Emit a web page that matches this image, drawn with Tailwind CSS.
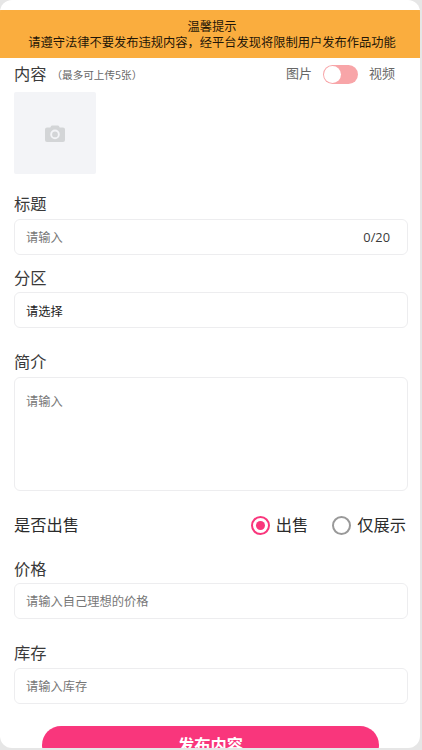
<!DOCTYPE html>
<html lang="zh-CN">
<head>
<meta charset="utf-8">
<meta name="viewport" content="width=device-width, initial-scale=1">
<title>发布内容</title>
<script src="https://cdn.jsdelivr.net/npm/@tailwindcss/browser@4"></script>
</head>
<body class="h-[750px] overflow-hidden bg-[#e6e6e6] font-['Open_Sans','Noto_Sans_CJK_SC',sans-serif] text-[#3a3a3a]">
<main class="flex h-[748px] w-[420px] flex-col overflow-hidden rounded-[12px] bg-white pt-[10px]">
  <div class="flex h-[48px] shrink-0 flex-col items-center justify-center bg-[#faad3e] pt-[2px] pl-[4px] text-[12.25px] leading-[16px] text-[#1f1608]">
    <p>温馨提示</p>
    <p class="whitespace-nowrap">请遵守法律不要发布违规内容，经平台发现将限制用户发布作品功能</p>
  </div>
  <form class="flex w-full shrink-0 flex-col pr-[12px] pl-[14px]">
    <div class="flex h-[34px] items-center pr-[13px] pb-[2px]">
      <span class="text-[16.25px]">内容</span>
      <span class="ml-[5px] pt-[3px] text-[10.6px] text-[#666]">（最多可上传5张）</span>
      <span class="ml-auto text-[13px] text-[#666]">图片</span>
      <span class="mr-[11px] ml-[11px] flex h-[19px] w-[35px] rounded-full bg-[#f8a5a8] p-px"><span class="size-[17px] rounded-full bg-white"></span></span>
      <span class="text-[13px] text-[#666]">视频</span>
    </div>
    <div class="flex size-[82px] items-center justify-center rounded-[2px] bg-[#f3f4f7]">
      <svg class="h-[17px] w-[20px]" viewBox="0 0 20 17"><path fill="#d3d5d7" fill-rule="evenodd" d="M7 .5h6q.6 0 .9.6L14.700 2.500H18a2 2 0 0 1 2 2V15a2 2 0 0 1-2 2H2a2 2 0 0 1-2-2V4.500a2 2 0 0 1 2-2h3.300L6.100 1.100Q6.400.5 7 .5zM10 4.600a4.800 4.800 0 1 0 0 9.600a4.800 4.800 0 0 0 0-9.600zM10 6.500a2.900 2.900 0 1 1 0 5.800a2.900 2.900 0 0 1 0-5.800z"/></svg>
    </div>
    <label class="mt-[15px] flex h-[30px] items-center pt-px text-[16.25px]">标题</label>
    <div class="flex h-[36px] items-center justify-between rounded-[6px] border border-[#ededef] pt-[2px] pr-[17px] pl-[11px] text-[12.25px]">
      <span class="text-[#777]">请输入</span><span class="text-[12.8px]">0/20</span>
    </div>
    <label class="mt-[8px] flex h-[29px] items-center pt-[2px] text-[16.25px]">分区</label>
    <div class="flex h-[36px] items-center rounded-[6px] border border-[#ededef] pt-[4px] pl-[11px] text-[12.25px] text-[#222]">请选择</div>
    <label class="mt-[19px] flex h-[30px] items-center text-[16.25px]">简介</label>
    <div class="h-[114px] rounded-[6px] border border-[#ededef] pt-[15px] pl-[11px] text-[12.25px] leading-[18px] text-[#777]">请输入</div>
    <div class="mt-[19px] flex h-[30px] items-center pr-[2px] text-[16.25px] text-[#2b2b2b]">
      <span>是否出售</span>
      <span class="ml-auto flex size-[19px] items-center justify-center rounded-full border-2 border-[#f9367c]"><span class="size-[9px] rounded-full bg-[#f9367c]"></span></span>
      <span class="ml-[6px]">出售</span>
      <span class="ml-[24px] size-[19px] rounded-full border-2 border-[#999]"></span>
      <span class="ml-[6px]">仅展示</span>
    </div>
    <label class="mt-[13px] flex h-[30px] items-center pt-[2px] text-[16.25px]">价格</label>
    <div class="flex h-[36px] items-center rounded-[6px] border border-[#ededef] pt-[2px] pl-[11px] text-[12.25px] text-[#777]">请输入自己理想的价格</div>
    <label class="mt-[19px] flex h-[30px] items-center text-[16.25px]">库存</label>
    <div class="flex h-[36px] items-center rounded-[6px] border border-[#ededef] pt-[2px] pl-[11px] text-[12.25px] text-[#777]">请输入库存</div>
    <button type="button" class="mt-[22px] ml-[28px] h-[38px] w-[337px] rounded-full bg-[#f9367c] text-[16.25px] font-bold text-white">发布内容</button>
  </form>
</main>
</body>
</html>
